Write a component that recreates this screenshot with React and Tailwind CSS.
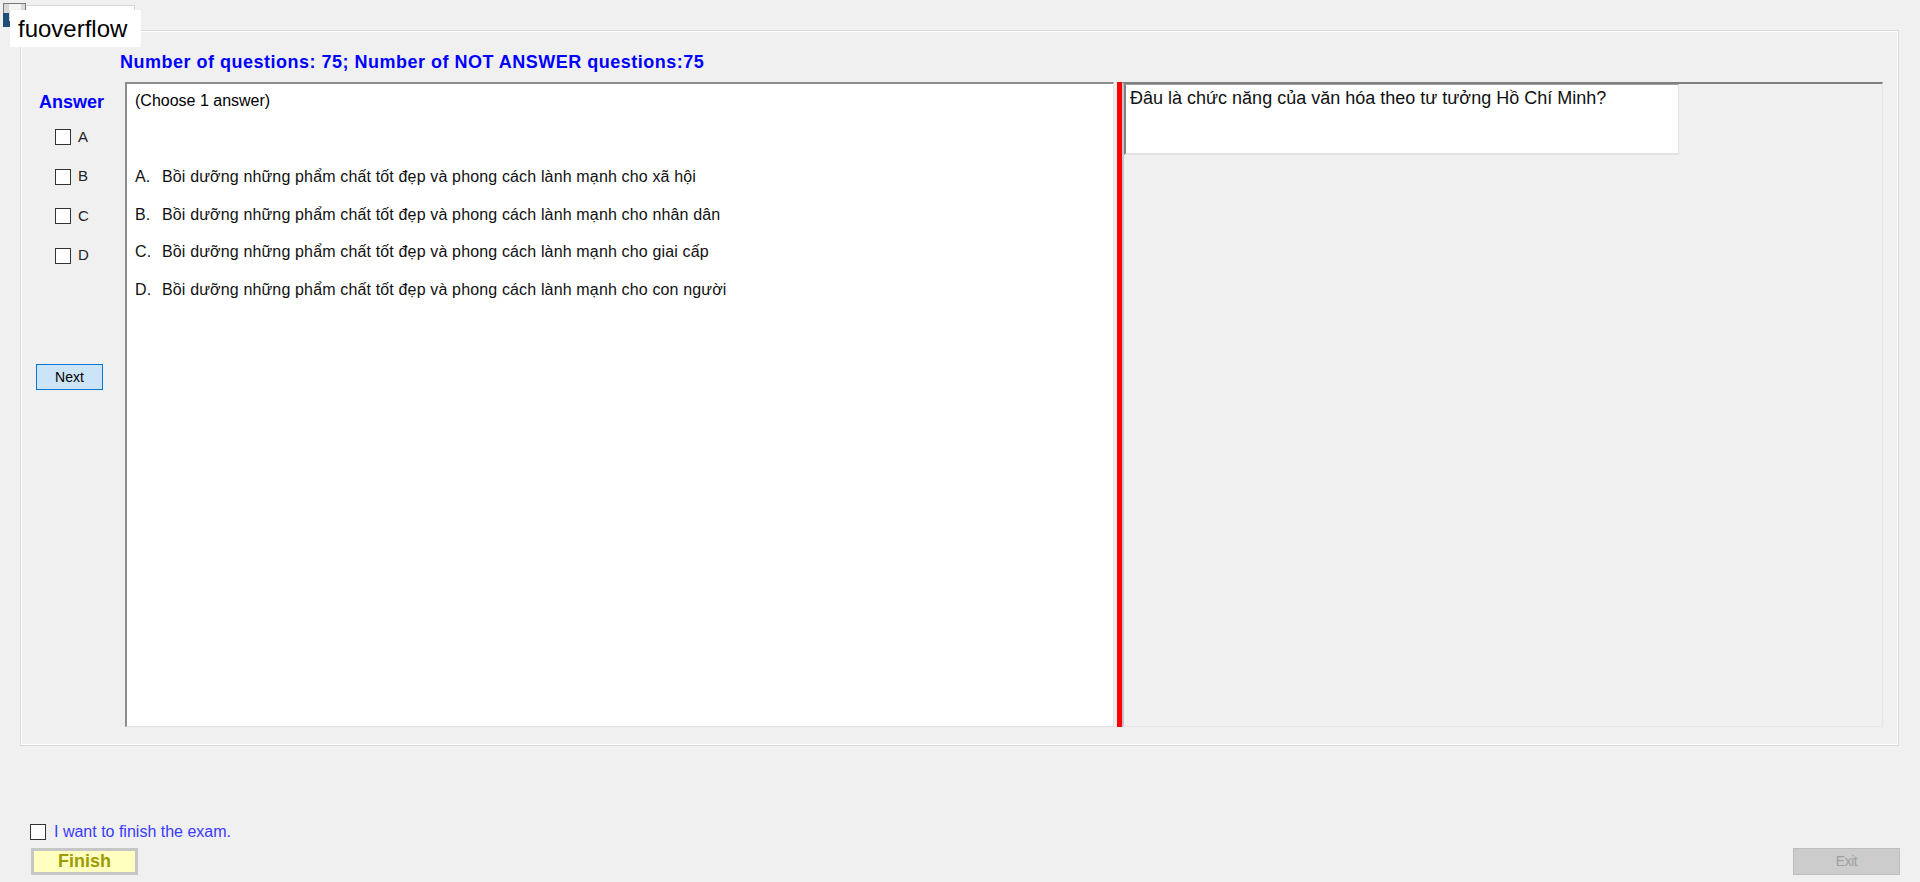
import React from "react";

const answers = [
  { key: "A", text: "Bồi dưỡng những phẩm chất tốt đẹp và phong cách lành mạnh cho xã hội" },
  { key: "B", text: "Bồi dưỡng những phẩm chất tốt đẹp và phong cách lành mạnh cho nhân dân" },
  { key: "C", text: "Bồi dưỡng những phẩm chất tốt đẹp và phong cách lành mạnh cho giai cấp" },
  { key: "D", text: "Bồi dưỡng những phẩm chất tốt đẹp và phong cách lành mạnh cho con người" },
];

const Box = () => (
  <span className="block w-[16px] h-[16px] border-[1.5px] border-[#333] bg-white shrink-0" />
);

const AppIcon = () => (
  <svg width="27" height="27" viewBox="0 0 27 27" className="shrink-0">
    <rect x="3.5" y="3.5" width="22" height="22" fill="#d9d9d9" stroke="#7a7a7a" />
    <rect x="9" y="4" width="12" height="6" fill="#f4f4f4" />
    <path d="M3 13 H9 V21 H15 V27 H3 Z" fill="#1f4e79" />
  </svg>
);

export default function App() {
  return (
    <div className="w-[1920px] h-[882px] bg-[#f0f0f0] relative overflow-hidden font-['Liberation_Sans',Arial,sans-serif] text-black">
      {/* window title strip */}
      <div className="h-[30px] flex">
        <AppIcon />
        <div className="mt-[5px] w-[108px] h-[25px] bg-white border-t border-r border-[#d6d6d6]" />
      </div>
      <div className="absolute left-[10px] top-[10px] w-[131px] h-[37px] bg-white pl-[8px] text-[24px] leading-[37px]">
        fuoverflow
      </div>

      {/* group box */}
      <div className="ml-[20px] w-[1879px] h-[716px] border border-[#d9d9d9]">
        <div className="w-full h-full border border-white">
          <div className="pl-[98px] pt-[20px] h-[41px] text-[18px] leading-[21px] font-bold tracking-[0.5px] text-[#0000ff]">
            Number of questions: 75; Number of NOT ANSWER questions:75
          </div>

          <div className="flex mt-[9px] h-[645px]">
            {/* answer column */}
            <div className="w-[103px] shrink-0">
              <div className="pl-[17px] pt-[10px] text-[18px] leading-[21px] font-bold text-[#0000ff]">Answer</div>
              <div className="flex flex-col gap-[23.5px] mt-[16px] pl-[33px]">
                {answers.map((a) => (
                  <div key={a.key} className="flex items-center h-[16px] gap-[7px] text-[15px] text-[#222]">
                    <Box />
                    <span>{a.key}</span>
                  </div>
                ))}
              </div>
              <button className="mt-[100px] ml-[14px] w-[67px] h-[26px] bg-[#cce4f7] border border-[#0078d7] text-[14px] leading-[24px] text-black">
                Next
              </button>
            </div>

            {/* answer panel */}
            <div className="w-[989px] h-[645px] shrink-0 bg-white border-t-2 border-l-2 border-[#8c8c8c] border-r border-b border-r-[#e3e3e3] border-b-[#e3e3e3] pl-[8px] pt-[8px]">
              <div className="text-[16px] leading-[18px]">(Choose 1 answer)</div>
              <div className="flex flex-col gap-[19.5px] mt-[58px] text-[16px] leading-[18px] tracking-[0.15px] text-[#111]">
                {answers.map((a) => (
                  <div key={a.key} className="flex">
                    <span className="w-[27px] shrink-0">{a.key}.</span>
                    <span>{a.text}</span>
                  </div>
                ))}
              </div>
            </div>

            {/* splitter */}
            <div className="w-[3px] shrink-0" />
            <div className="w-[5px] h-[645px] shrink-0 bg-[#ff0000]" />

            {/* question panel */}
            <div className="w-[761px] h-[645px] shrink-0 bg-[#f0f0f0] border-t-2 border-t-[#808080] border-l-2 border-l-[#c4c4c4] border-r border-r-[#e6e6e6] border-b border-b-[#e6e6e6]">
              <div className="w-[555px] h-[71px] bg-white border-l-2 border-l-[#808080] border-t border-t-[#a0a0a0] border-r border-r-[#e3e3e3] border-b-2 border-b-[#e3e3e3] pl-[4px] pt-[3px] text-[18px] leading-[21px] text-[#111]">
                Đâu là chức năng của văn hóa theo tư tưởng Hồ Chí Minh?
              </div>
            </div>
          </div>
        </div>
      </div>

      {/* bottom controls */}
      <div className="mt-[78px] pl-[30px] flex items-center h-[16px] gap-[8px]">
        <Box />
        <span className="text-[16px] leading-[18px] text-[#3a3aff]">I want to finish the exam.</span>
      </div>
      <div className="mt-[8px] pl-[31px] pr-[20px] flex justify-between">
        <button className="w-[107px] h-[27px] bg-[#ffffc0] border-[3px] border-[#c6c6c6] text-[18px] leading-[21px] font-bold text-[#9c9c00]">
          Finish
        </button>
        <button className="w-[107px] h-[27px] bg-[#cccccc] border border-[#bdbdbd] text-[14px] leading-[25px] tracking-[-0.5px] text-[#a0a0a0]">
          Exit
        </button>
      </div>
    </div>
  );
}
